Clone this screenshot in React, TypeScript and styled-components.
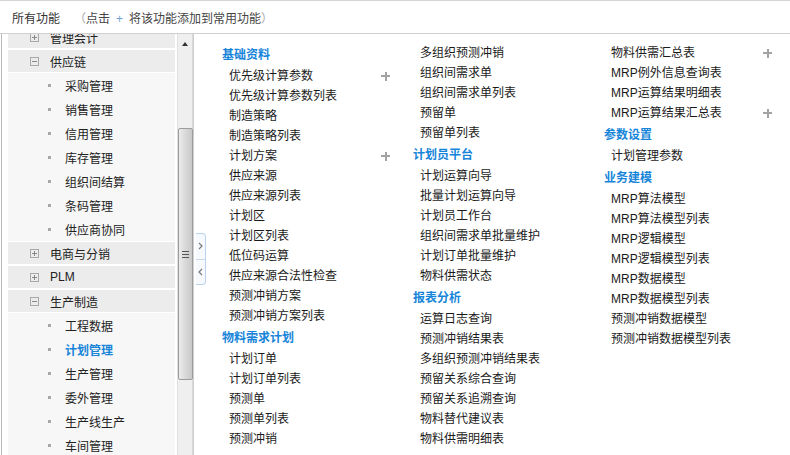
import React from 'react';
import styled, { createGlobalStyle } from 'styled-components';

const GlobalStyle = createGlobalStyle`
  html, body {
    margin: 0;
    padding: 0;
    background: #fff;
  }
  body {
    font-family: "Liberation Sans", "Noto Sans CJK SC", sans-serif;
    font-size: 12px;
    color: #222;
  }
  * {
    box-sizing: border-box;
  }
`;

const Page = styled.div`
  width: 790px;
  height: 455px;
  overflow: hidden;
  border-top: 1px solid #d4d4d4;
  display: flex;
  flex-direction: column;
`;

const Header = styled.div`
  height: 33px;
  padding-left: 12px;
  display: flex;
  align-items: center;
  border-bottom: 1px solid #d0d0d0;
  color: #333;
  white-space: nowrap;
`;

const Hint = styled.span`
  margin-left: 14px;
  color: #444;
`;

const Paren = styled.span`
  color: #aaa;
`;

const HintPlus = styled.span`
  color: #6d9fd4;
  margin: 0 6px;
`;

const Body = styled.div`
  flex: 1;
  display: flex;
  min-height: 0;
`;

const Sidebar = styled.div`
  margin-left: 1px;
  border-left: 1px solid #b8b8b8;
  border-right: 1px solid #cfcfcf;
  padding-left: 6px;
  display: flex;
  gap: 2px;
  height: 100%;
`;

const TreeViewport = styled.div`
  width: 167px;
  height: 100%;
  overflow: hidden;
  background: #f7f7f7;
`;

const TreeList = styled.div`
  margin-top: -9px;
`;

const GroupRow = styled.div`
  height: 24px;
  display: flex;
  align-items: center;
  background: #ececec;
  border-top: 1px solid #fff;
  border-bottom: 1px solid #fff;
  padding-left: 22px;
  color: #222;
`;

const Expander = styled.span<{ $open?: boolean }>`
  position: relative;
  width: 9px;
  height: 9px;
  border: 1px solid #a8a8a8;
  margin-right: 11px;
  flex-shrink: 0;

  &::before {
    content: '';
    position: absolute;
    left: 1px;
    top: 3px;
    width: 5px;
    height: 1px;
    background: #888;
  }

  &::after {
    content: '';
    position: absolute;
    left: 3px;
    top: 1px;
    width: 1px;
    height: 5px;
    background: #888;
    display: ${p => (p.$open ? 'none' : 'block')};
  }
`;

const LeafRow = styled.div<{ $active?: boolean }>`
  height: 24px;
  display: flex;
  align-items: center;
  padding-left: 40px;
  color: ${p => (p.$active ? '#1685d9' : '#222')};
  font-weight: ${p => (p.$active ? 'bold' : 'normal')};
`;

const Bullet = styled.span`
  width: 3px;
  height: 3px;
  background: #a8a8a8;
  margin-right: 14px;
  flex-shrink: 0;
`;

const Scrollbar = styled.div`
  width: 16px;
  height: 100%;
  background: #efefef;
  border-left: 1px solid #e0e0e0;
  border-right: 1px solid #d8d8d8;
  display: flex;
  flex-direction: column;
  align-items: center;
`;

const ArrowUp = styled.div`
  margin-top: 8px;
  width: 0;
  height: 0;
  border-left: 3px solid transparent;
  border-right: 3px solid transparent;
  border-bottom: 4px solid #333;
`;

const Thumb = styled.div`
  margin-top: 82px;
  width: 15px;
  height: 252px;
  border: 1px solid #9c9c9c;
  border-radius: 2px;
  background: linear-gradient(to right, #ececec 0%, #dadada 45%, #c9c9c9 100%);
  display: flex;
  align-items: center;
  justify-content: center;
`;

const Grip = styled.div`
  width: 7px;
  height: 7px;
  background: repeating-linear-gradient(to bottom, #555 0 1px, transparent 1px 3px);
`;

const Content = styled.div`
  position: relative;
  flex: 1;
  display: flex;
  padding: 9px 0 0 28px;
`;

const ToggleTab = styled.div`
  position: absolute;
  left: 2px;
  top: 199px;
  width: 10px;
  height: 52px;
  border: 1px solid #b9d3ee;
  border-left: none;
  border-radius: 0 4px 4px 0;
  background: #f6f9fd;
  display: flex;
  flex-direction: column;
`;

const TabHalf = styled.div<{ $top?: boolean }>`
  flex: 1;
  display: flex;
  align-items: center;
  justify-content: center;
  border-bottom: ${p => (p.$top ? '1px solid #c9d9ea' : 'none')};
`;

const Column = styled.div`
  width: 170px;
  margin-right: 21px;
`;

const SectionTitle = styled.div`
  margin-top: 1px;
  height: 22px;
  line-height: 22px;
  font-weight: bold;
  color: #1685d9;
  white-space: nowrap;
`;

const Item = styled.div`
  height: 20px;
  line-height: 20px;
  padding-left: 7px;
  display: flex;
  align-items: center;
  justify-content: space-between;
  color: #1a1a1a;
  white-space: nowrap;
`;

const AddIcon = styled.span`
  position: relative;
  width: 9px;
  height: 9px;
  margin-right: 2px;

  &::before,
  &::after {
    content: '';
    position: absolute;
    background: #a3a3a3;
  }
  &::before {
    left: 0;
    top: 3.5px;
    width: 9px;
    height: 2px;
  }
  &::after {
    left: 3.5px;
    top: 0;
    width: 2px;
    height: 9px;
  }
`;

type Entry = { t: 'h' | 'i'; label: string; add?: boolean };

const h = (label: string): Entry => ({ t: 'h', label });
const i = (label: string, add = false): Entry => ({ t: 'i', label, add });

const columns: Entry[][] = [
  [
    h('基础资料'),
    i('优先级计算参数', true),
    i('优先级计算参数列表'),
    i('制造策略'),
    i('制造策略列表'),
    i('计划方案', true),
    i('供应来源'),
    i('供应来源列表'),
    i('计划区'),
    i('计划区列表'),
    i('低位码运算'),
    i('供应来源合法性检查'),
    i('预测冲销方案'),
    i('预测冲销方案列表'),
    h('物料需求计划'),
    i('计划订单'),
    i('计划订单列表'),
    i('预测单'),
    i('预测单列表'),
    i('预测冲销'),
  ],
  [
    i('多组织预测冲销'),
    i('组织间需求单'),
    i('组织间需求单列表'),
    i('预留单'),
    i('预留单列表'),
    h('计划员平台'),
    i('计划运算向导'),
    i('批量计划运算向导'),
    i('计划员工作台'),
    i('组织间需求单批量维护'),
    i('计划订单批量维护'),
    i('物料供需状态'),
    h('报表分析'),
    i('运算日志查询'),
    i('预测冲销结果表'),
    i('多组织预测冲销结果表'),
    i('预留关系综合查询'),
    i('预留关系追溯查询'),
    i('物料替代建议表'),
    i('物料供需明细表'),
  ],
  [
    i('物料供需汇总表', true),
    i('MRP例外信息查询表'),
    i('MRP运算结果明细表'),
    i('MRP运算结果汇总表', true),
    h('参数设置'),
    i('计划管理参数'),
    h('业务建模'),
    i('MRP算法模型'),
    i('MRP算法模型列表'),
    i('MRP逻辑模型'),
    i('MRP逻辑模型列表'),
    i('MRP数据模型'),
    i('MRP数据模型列表'),
    i('预测冲销数据模型'),
    i('预测冲销数据模型列表'),
  ],
];

type TreeNode = { label: string; open?: boolean; children?: string[] };

const tree: TreeNode[] = [
  { label: '管理会计' },
  {
    label: '供应链',
    open: true,
    children: ['采购管理', '销售管理', '信用管理', '库存管理', '组织间结算', '条码管理', '供应商协同'],
  },
  { label: '电商与分销' },
  { label: 'PLM' },
  {
    label: '生产制造',
    open: true,
    children: ['工程数据', '计划管理', '生产管理', '委外管理', '生产线生产', '车间管理'],
  },
];

const Chevron = ({ dir }: { dir: 'left' | 'right' }) => (
  <svg width="5" height="8" viewBox="0 0 5 8">
    <polyline
      points={dir === 'right' ? '1,1 4,4 1,7' : '4,1 1,4 4,7'}
      fill="none"
      stroke="#7a7a7a"
      strokeWidth="1.2"
    />
  </svg>
);

const App: React.FC = () => {
  return (
    <>
      <GlobalStyle />
      <Page>
        <Header>
          所有功能
          <Hint>
            <Paren>（</Paren>点击<HintPlus>+</HintPlus>将该功能添加到常用功能<Paren>）</Paren>
          </Hint>
        </Header>
        <Body>
          <Sidebar>
            <TreeViewport>
              <TreeList>
                {tree.map(node => (
                  <React.Fragment key={node.label}>
                    <GroupRow>
                      <Expander $open={node.open} />
                      {node.label}
                    </GroupRow>
                    {node.open &&
                      node.children?.map(child => (
                        <LeafRow key={child} $active={child === '计划管理'}>
                          <Bullet />
                          {child}
                        </LeafRow>
                      ))}
                  </React.Fragment>
                ))}
              </TreeList>
            </TreeViewport>
            <Scrollbar>
              <ArrowUp />
              <Thumb>
                <Grip />
              </Thumb>
            </Scrollbar>
          </Sidebar>
          <Content>
            <ToggleTab>
              <TabHalf $top>
                <Chevron dir="right" />
              </TabHalf>
              <TabHalf>
                <Chevron dir="left" />
              </TabHalf>
            </ToggleTab>
            {columns.map((col, ci) => (
              <Column key={ci}>
                {col.map(entry =>
                  entry.t === 'h' ? (
                    <SectionTitle key={entry.label}>{entry.label}</SectionTitle>
                  ) : (
                    <Item key={entry.label}>
                      <span>{entry.label}</span>
                      {entry.add && <AddIcon />}
                    </Item>
                  )
                )}
              </Column>
            ))}
          </Content>
        </Body>
      </Page>
    </>
  );
};

export default App;
